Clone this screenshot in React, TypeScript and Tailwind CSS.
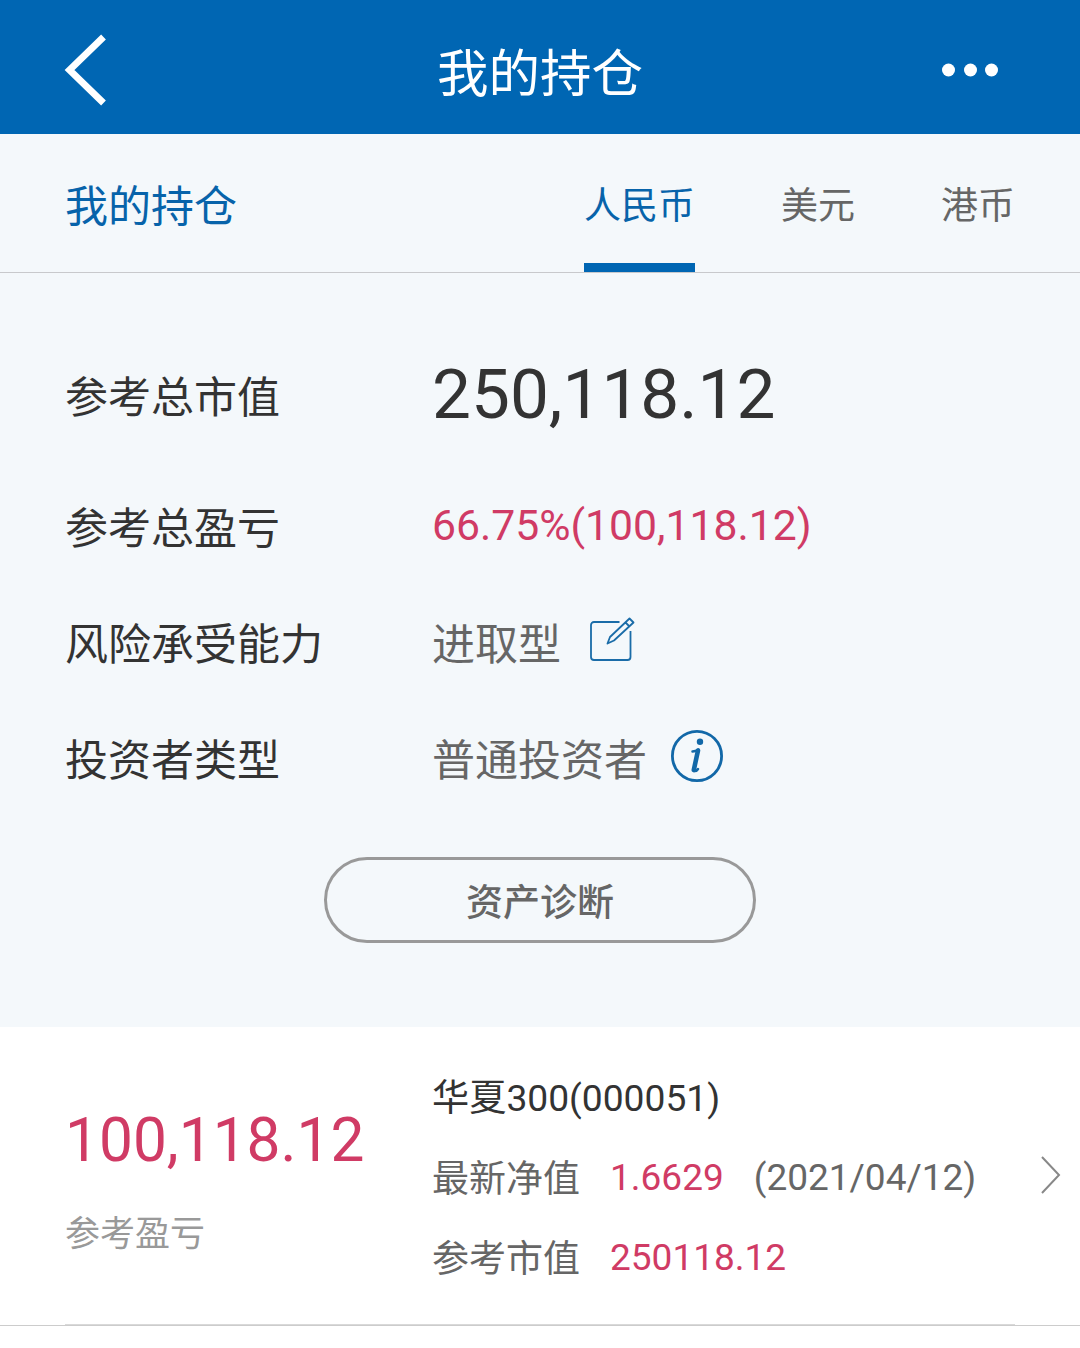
import React from 'react';

const tabs = [
  { label: '人民币', active: true },
  { label: '美元', active: false },
  { label: '港币', active: false },
];

const EditIcon = () => (
  <svg className="mb-[12px] ml-[28px] h-[46px] w-[46px]" viewBox="0 0 46 46" fill="none" stroke="#1a6ca8" strokeWidth="1.8" strokeLinejoin="round">
    <path d="M30.500 6H5a3 3 0 0 0-3 3v32a3 3 0 0 0 3 3h33.500a3 3 0 0 0 3-3V15" />
    <path d="M40.500 2.500l4 4L25 24.500l-6.500 3L21 21zM36.500 6.500l4 4" />
  </svg>
);

const InfoIcon = () => (
  <svg className="mb-[10px] ml-[23px] h-[54px] w-[54px]" viewBox="0 0 54 54" fill="none" stroke="#1268a8">
    <circle cx="27" cy="27" r="24.600" strokeWidth="2.800" />
    <circle cx="30" cy="12.700" r="3.200" fill="#1268a8" stroke="none" />
    <path d="M22.500 22.500q3 0 6-2" strokeWidth="2.500" strokeLinecap="round" />
    <path d="M28 21.500l-4.200 19.500" strokeWidth="4.600" strokeLinecap="round" />
    <path d="M24 42q2.500.5 4-2" strokeWidth="2.500" strokeLinecap="round" />
  </svg>
);

const App: React.FC = () => {
  return (
    <div className="h-[1348px] w-[1080px] overflow-hidden bg-white font-[Roboto,'Noto_Sans_CJK_SC',sans-serif] text-[#333]">
      <header className="grid h-[134px] grid-cols-[1fr_auto_1fr] items-center bg-[#0066b3] pt-[6px] text-white">
        <svg className="ml-[64px] h-[72px] w-[42px]" viewBox="0 0 42 72" fill="none" stroke="white" strokeWidth="6.800">
          <path d="M39.500 3L5.500 36l34 33" />
        </svg>
        <h1 className="pt-[10px] text-[51.500px] leading-[60px]">我的持仓</h1>
        <svg className="mr-[82px] h-[14px] w-[56px] justify-self-end" viewBox="0 0 56 14" fill="white">
          <circle cx="6.500" cy="7" r="6.500" />
          <circle cx="28.500" cy="7" r="6.500" />
          <circle cx="49.500" cy="7" r="6.500" />
        </svg>
      </header>

      <section className="h-[893px] bg-[#f4f8fb]">
        <nav className="flex h-[139px] items-stretch border-b border-[#c8c9cc] px-[65px]">
          <h2 className="mr-auto pt-[43px] text-[43px] leading-[60px] text-[#0763aa]">我的持仓</h2>
          <div className="flex gap-[86px]">
            {tabs.map(tab => (
              <button
                key={tab.label}
                className={`border-b-[9px] pt-[16px] text-[37px] ${tab.active ? 'border-[#0066b3] text-[#0763aa]' : 'border-transparent text-[#666]'}`}>
                {tab.label}
              </button>
            ))}
          </div>
        </nav>

        <dl className="grid grid-cols-[367px_1fr] grid-rows-[136px_125px_108px_124px] items-center pt-[54px] pl-[65px] text-[43px]">
          <dt className="pt-[7px]">参考总市值</dt>
          <dd className="text-[69.300px]">250,118.12</dd>
          <dt className="pt-[7px]">参考总盈亏</dt>
          <dd className="text-[42.700px] text-[#d03b65]">66.75%(100,118.12)</dd>
          <dt className="pt-[6px]">风险承受能力</dt>
          <dd className="flex items-center pt-[6px] text-[#666]">进取型<EditIcon /></dd>
          <dt className="pt-[6px]">投资者类型</dt>
          <dd className="flex items-center pt-[6px] text-[#666]">普通投资者<InfoIcon /></dd>
        </dl>

        <button className="mx-auto mt-[37px] block h-[86px] w-[432px] rounded-full border-[3px] border-[#999] pt-[8px] text-[37px] font-medium text-[#666]">
          资产诊断
        </button>
      </section>

      <section className="flex h-[299px] items-center border-b border-[#ccc] pl-[65px]">
        <div className="w-[367px] pt-[13px]">
          <p className="text-[60.400px] leading-[72px] text-[#d03b65]">100,118.12</p>
          <p className="mt-[33px] text-[35px] leading-[50px] text-[#999]">参考盈亏</p>
        </div>
        <div className="flex flex-col gap-[30px] pt-[3px] text-[37px] leading-[50px]">
          <h3 className="text-[37.200px]">华夏300(000051)</h3>
          <p className="flex text-[#666]"><span className="-mb-[2px] pt-[2px]">最新净值</span><span className="ml-[30px] text-[#d03b65]">1.6629</span><span className="ml-[30px]">(2021/04/12)</span></p>
          <p className="flex text-[#666]"><span className="-mb-[2px] pt-[2px]">参考市值</span><span className="ml-[30px] text-[#d03b65]">250118.12</span></p>
        </div>
        <svg className="mr-[19px] mb-[2px] ml-auto h-[38px] w-[20px]" viewBox="0 0 20 38" fill="none" stroke="#888" strokeWidth="2">
          <path d="M1 1l17 18L1 37" />
        </svg>
      </section>
      <div className="mx-[65px] -mt-[2px] h-px bg-[#d9d9d9]" />
    </div>
  );
};

export default App;
